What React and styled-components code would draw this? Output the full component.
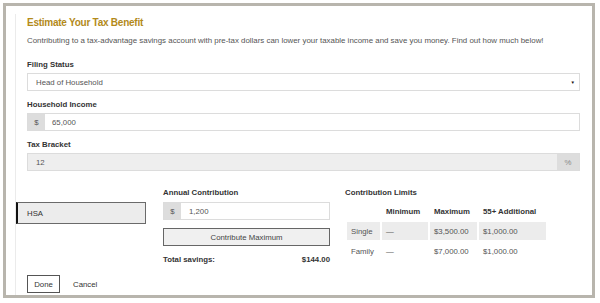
import React, { useState } from 'react'
import styled, { createGlobalStyle } from 'styled-components'

const GlobalStyle = createGlobalStyle`
  html, body {
    margin: 0;
    background: #fff;
    font-family: 'Liberation Sans', Arial, sans-serif;
  }
`

const Frame = styled.div`
  box-sizing: border-box;
  margin: 3px;
  width: 592px;
  height: 295px;
  border: 3px solid #b8b5ad;
  padding: 8px 0 0 9px;
`

const Panel = styled.div`
  box-sizing: border-box;
  height: 100%;
  border-left: 1px solid #ebebeb;
  padding-top: 2px;
`

const Top = styled.div`
  padding: 0 12px 0 11px;
`

const Title = styled.h2`
  margin: 0;
  font-size: 10px;
  line-height: 14px;
  letter-spacing: -0.25px;
  font-weight: bold;
  color: #b38a1a;
`

const Intro = styled.p`
  margin: 6px 0 0;
  font-size: 7.9px;
  line-height: 10px;
  color: #555;
`

const Field = styled.div`
  margin-top: ${(props) => props.$gap || 9}px;
`

const Label = styled.label`
  display: block;
  font-size: 7.8px;
  line-height: 10px;
  font-weight: bold;
  color: #333;
  margin-bottom: ${(props) => props.$space || 3}px;
`

const Control = styled.div`
  box-sizing: border-box;
  display: flex;
  align-items: stretch;
  height: 18px;
  border: 1px solid #dcdcdc;
  background: ${(props) => (props.$muted ? '#eeeeee' : '#fff')};
  font-size: 7.8px;
  color: #555;
`

const Value = styled.span`
  flex: 1;
  display: flex;
  align-items: center;
  padding-left: ${(props) => props.$pad || 8}px;
`

const Addon = styled.span`
  width: ${(props) => props.$width || 17}px;
  display: flex;
  align-items: center;
  justify-content: center;
  background: #dddddd;
  color: ${(props) => (props.$light ? '#888' : '#555')};
`

const Caret = styled.span`
  display: flex;
  align-items: center;
  padding-right: 4px;
  font-size: 4.5px;
  color: #111;
`

const Lower = styled.div`
  display: flex;
  align-items: flex-start;
  margin-top: 17px;
`

const Tabs = styled.div`
  width: 130px;
  padding-top: 14px;
`

const Tab = styled.div`
  box-sizing: border-box;
  height: 22px;
  display: flex;
  align-items: center;
  padding-left: 9px;
  background: #ececec;
  border: 1px solid #6a6a6a;
  border-left: 2px solid #111;
  font-size: 7.8px;
  color: #333;
`

const Contribution = styled.div`
  width: 167px;
  margin-left: 17px;
`

const WideButton = styled.button`
  box-sizing: border-box;
  display: block;
  width: 100%;
  height: 18px;
  margin-top: 8px;
  padding: 0;
  border: 1px solid #666;
  background: #f0f0f0;
  font-family: inherit;
  font-size: 7.8px;
  color: #444;
`

const Total = styled.div`
  display: flex;
  justify-content: space-between;
  margin-top: 9px;
  font-size: 7.8px;
  line-height: 10px;
  font-weight: bold;
  color: #333;
`

const Limits = styled.div`
  margin-left: 15px;
`

const Table = styled.table`
  margin-top: 2px;
  border-collapse: separate;
  border-spacing: 2px;
  font-size: 7.8px;
  color: #555;
`

const Th = styled.th`
  height: 17px;
  padding: 0 4px;
  text-align: left;
  font-weight: bold;
  color: #333;
`

const Td = styled.td`
  height: 18px;
  padding: 0 4px;
  background: ${(props) => (props.$shade ? '#ececec' : 'transparent')};
`

const Footer = styled.div`
  display: flex;
  align-items: center;
  gap: 13px;
  margin-top: 10px;
  padding-left: 11px;
`

const Done = styled.button`
  box-sizing: border-box;
  width: 33px;
  height: 18px;
  padding: 0;
  border: 1px solid #555;
  background: #fff;
  font-family: inherit;
  font-size: 7.8px;
  color: #333;
`

const Cancel = styled.span`
  font-size: 7.8px;
  color: #333;
`

const limits = [
  { name: 'Single', min: '—', max: '$3,500.00', extra: '$1,000.00' },
  { name: 'Family', min: '—', max: '$7,000.00', extra: '$1,000.00' },
]

const App = () => {
  const [contribution] = useState('1,200')

  return (
    <>
      <GlobalStyle />
      <Frame>
        <Panel>
          <Top>
            <Title>Estimate Your Tax Benefit</Title>
            <Intro>
              Contributing to a tax-advantage savings account with pre-tax
              dollars can lower your taxable income and save you money. Find
              out how much below!
            </Intro>
            <Field $gap={14}>
              <Label>Filing Status</Label>
              <Control>
                <Value>Head of Household</Value>
                <Caret>▼</Caret>
              </Control>
            </Field>
            <Field>
              <Label>Household Income</Label>
              <Control>
                <Addon>$</Addon>
                <Value $pad={7}>65,000</Value>
              </Control>
            </Field>
            <Field>
              <Label>Tax Bracket</Label>
              <Control $muted>
                <Value>12</Value>
                <Addon $width={22} $light>%</Addon>
              </Control>
            </Field>
          </Top>

          <Lower>
            <Tabs>
              <Tab>HSA</Tab>
            </Tabs>
            <Contribution>
              <Label $space={4}>Annual Contribution</Label>
              <Control>
                <Addon>$</Addon>
                <Value>{contribution}</Value>
              </Control>
              <WideButton type="button">Contribute Maximum</WideButton>
              <Total>
                <span>Total savings:</span>
                <span>$144.00</span>
              </Total>
            </Contribution>
            <Limits>
              <Label>Contribution Limits</Label>
              <Table>
                <colgroup>
                  <col style={{ width: 33 }} />
                  <col style={{ width: 46 }} />
                  <col style={{ width: 47 }} />
                  <col style={{ width: 67 }} />
                </colgroup>
                <thead>
                  <tr>
                    <Th></Th>
                    <Th>Minimum</Th>
                    <Th>Maximum</Th>
                    <Th>55+ Additional</Th>
                  </tr>
                </thead>
                <tbody>
                  {limits.map((row, i) => (
                    <tr key={row.name}>
                      <Td $shade={i === 0}>{row.name}</Td>
                      <Td $shade={i === 0}>{row.min}</Td>
                      <Td $shade={i === 0}>{row.max}</Td>
                      <Td $shade={i === 0}>{row.extra}</Td>
                    </tr>
                  ))}
                </tbody>
              </Table>
            </Limits>
          </Lower>

          <Footer>
            <Done type="button">Done</Done>
            <Cancel>Cancel</Cancel>
          </Footer>
        </Panel>
      </Frame>
    </>
  )
}

export default App
